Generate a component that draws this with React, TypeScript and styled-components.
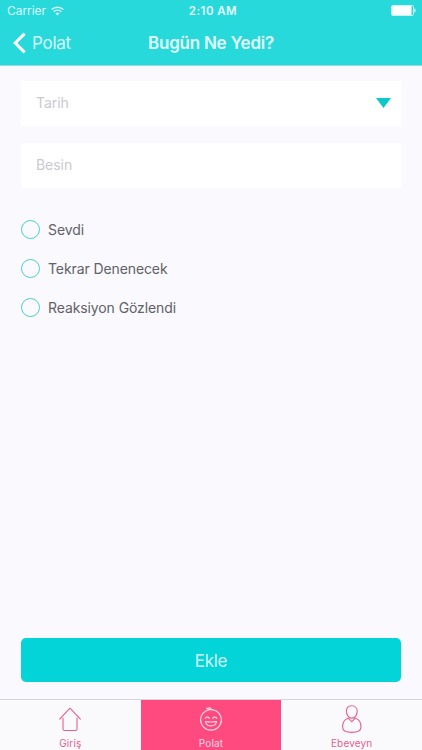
import React from "react";
import styled, { createGlobalStyle } from "styled-components";

const GlobalStyle = createGlobalStyle`
  *, *::before, *::after { box-sizing: border-box; }
  html, body { margin: 0; padding: 0; }
  body { font-family: Inter, "Liberation Sans", sans-serif; }
`;

const Screen = styled.div`
  display: flex;
  flex-direction: column;
  width: 422px;
  height: 750px;
  overflow: hidden;
  background: #f9f9fe;
`;

const Header = styled.header`
  flex: none;
  height: 66px;
  background: #27d9db;
  border-bottom: 1px solid #8fdde3;
  color: #fff;
`;

const StatusBar = styled.div`
  display: grid;
  grid-template-columns: 1fr auto 1fr;
  align-items: center;
  height: 22px;
  padding: 0 6px 0 7px;
  color: #dcfafa;
`;

const Carrier = styled.div`
  display: flex;
  align-items: center;
  gap: 5px;
  font-size: 12px;
  line-height: 22px;
  letter-spacing: -0.05px;
`;

const Clock = styled.div`
  padding-left: 3px;
  font-size: 11.5px;
  font-weight: 600;
  line-height: 22px;
  letter-spacing: 0.45px;
  color: #e4fbfb;
`;

const BatterySlot = styled.div`
  display: flex;
  justify-content: flex-end;
  padding-bottom: 1px;
`;

const NavBar = styled.div`
  display: grid;
  grid-template-columns: 1fr auto 1fr;
  align-items: center;
  height: 42px;
`;

const BackButton = styled.button`
  display: flex;
  align-items: center;
  gap: 6px;
  padding: 0 0 0 13px;
  border: 0;
  background: none;
  color: #d8f9fa;
  font: 400 17px/42px Inter, sans-serif;
  letter-spacing: -0.25px;
`;

const Title = styled.h1`
  margin: 0;
  font-size: 17px;
  font-weight: 600;
  line-height: 42px;
  letter-spacing: -0.25px;
  color: #e0fbfb;
`;

const Content = styled.main`
  flex: 1;
  display: flex;
  flex-direction: column;
  padding: 15px 21px 17px;
`;

const Field = styled.div<{ $gap: number }>`
  display: flex;
  align-items: center;
  justify-content: space-between;
  height: 45px;
  margin-bottom: ${(p) => p.$gap}px;
  padding: 0 10px 2px 15px;
  background: #fff;
  color: #c9c9cf;
  font-size: 14px;
  letter-spacing: -0.05px;
`;

const Options = styled.div`
  display: flex;
  flex-direction: column;
  gap: 19.2px;
`;

const Option = styled.label`
  display: flex;
  align-items: center;
  gap: 8px;
  height: 20px;
  color: #626266;
  font-size: 14px;
  letter-spacing: -0.1px;
`;

const Radio = styled.span`
  flex: none;
  width: 19px;
  height: 19px;
  border: 1px solid #4bd0cf;
  border-radius: 50%;
`;

const SubmitButton = styled.button`
  height: 44.5px;
  margin-top: auto;
  padding: 2px 0 0;
  border: 0;
  border-radius: 5px;
  background: #02d4d7;
  color: #d5f9fa;
  font: 400 17px/42px Inter, sans-serif;
  letter-spacing: -0.3px;
`;

const TabBar = styled.nav`
  flex: none;
  display: grid;
  grid-template-columns: repeat(3, 1fr);
  height: 51px;
  border-top: 1px solid #d4d4dc;
  background: #fafafd;
`;

const Tab = styled.div<{ $active?: boolean }>`
  display: flex;
  flex-direction: column;
  align-items: center;
  padding-top: 5px;
  background: ${(p) => (p.$active ? "#ff4a80" : "transparent")};
  color: ${(p) => (p.$active ? "#ffd9e4" : "#e5618c")};
  svg { flex: none; display: block; }
`;

const TabLabel = styled.span`
  margin-top: 2px;
  font-size: 10px;
  line-height: 14px;
  letter-spacing: 0.15px;
`;

const WifiIcon = () => (
  <svg width="13" height="10" viewBox="0 0 13 10" fill="none" stroke="currentColor" strokeWidth="1.4">
    <path d="M.7 3.6a8.2 8.2 0 0 1 11.6 0M2.7 5.7a5.4 5.4 0 0 1 7.6 0" />
    <path d="M6.5 9.5 4.5 7.5a2.8 2.8 0 0 1 4 0Z" fill="currentColor" stroke="none" />
  </svg>
);

const BatteryIcon = () => (
  <svg width="25" height="11" viewBox="0 0 25 11">
    <rect x=".5" y=".5" width="22" height="10" rx="1.2" fill="none" stroke="#c4f4f5" />
    <rect x="1" y="1" width="19.5" height="9" fill="#fff" />
    <path d="M23.3 3.8h1.2v3.4h-1.2z" fill="#d7f8f8" />
  </svg>
);

const BackIcon = () => (
  <svg width="13" height="22" viewBox="0 0 13 22" fill="none" stroke="#fff" strokeWidth="3">
    <path d="M11.6 1.6 2.2 11l9.4 9.4" />
  </svg>
);

const DropdownIcon = () => (
  <svg width="15" height="10" viewBox="0 0 15 10">
    <path d="M0 0h15L7.5 10z" fill="#0cc8c8" />
  </svg>
);

const HomeIcon = () => (
  <svg width="24" height="29" viewBox="0 -1 24 29" fill="none" stroke="currentColor" strokeWidth="1.1" strokeLinecap="round" strokeLinejoin="round">
    <path d="M1.7 13.2 11.2 2.8Q12 2 12.8 2.8l9.5 10.4" />
    <path d="M5 12v11q0 1.5 1.5 1.5h11q1.5 0 1.5-1.5V12" />
  </svg>
);

const BabyIcon = () => (
  <svg width="24" height="29" viewBox="0 -1 24 29" fill="none" stroke="currentColor" strokeWidth="1.2" strokeLinecap="round" strokeLinejoin="round">
    <path d="M9.6 4C4.9 5 1.6 8.9 1.6 13.8a10.4 10.4 0 0 0 20.8 0c0-5-3.5-9.1-8.3-9.9-2.6-.4-4.6-.1-6.5-1.5 1.5.2 2.5 0 3-.9.8 1.2 2 2.1 3.5 2.4" />
    <path d="M6.2 12.2q2.1-2 4.2 0M13.6 12.2q2.1-2 4.2 0" />
    <path d="M6.5 15.5q5.5 1 11 0c-.5 2.9-2.7 4.4-5.5 4.4s-5-1.5-5.5-4.4Z" />
  </svg>
);

const ParentIcon = () => (
  <svg width="24" height="29" viewBox="0 -1 24 29" fill="none" stroke="currentColor" strokeWidth="1.1" strokeLinecap="round" strokeLinejoin="round">
    <path d="M11.8-.2c-3.4 0-5.4 2.4-5.4 5.5 0 3 1.9 6.8 5.4 6.8s5.4-3.8 5.4-6.8c0-3.1-2-5.5-5.4-5.5Z" />
    <path d="M8.2 12.2C4.5 13.2 2.6 17 2.6 21c0 4 4.5 5.4 9.2 5.4s9.2-1.4 9.2-5.4c0-4-1.9-7.8-5.6-8.8l-3.6 3.4Z" />
  </svg>
);

const options = ["Sevdi", "Tekrar Denenecek", "Reaksiyon Gözlendi"];

export default function App() {
  return (
    <>
      <GlobalStyle />
      <Screen>
        <Header>
          <StatusBar>
            <Carrier>Carrier <WifiIcon /></Carrier>
            <Clock>2:10 AM</Clock>
            <BatterySlot><BatteryIcon /></BatterySlot>
          </StatusBar>
          <NavBar>
            <BackButton><BackIcon />Polat</BackButton>
            <Title>Bugün Ne Yedi?</Title>
          </NavBar>
        </Header>
        <Content>
          <Field $gap={17}>Tarih<DropdownIcon /></Field>
          <Field $gap={31}>Besin</Field>
          <Options>
            {options.map((label) => (
              <Option key={label}><Radio />{label}</Option>
            ))}
          </Options>
          <SubmitButton>Ekle</SubmitButton>
        </Content>
        <TabBar>
          <Tab><HomeIcon /><TabLabel>Giriş</TabLabel></Tab>
          <Tab $active><BabyIcon /><TabLabel>Polat</TabLabel></Tab>
          <Tab><ParentIcon /><TabLabel>Ebeveyn</TabLabel></Tab>
        </TabBar>
      </Screen>
    </>
  );
}
